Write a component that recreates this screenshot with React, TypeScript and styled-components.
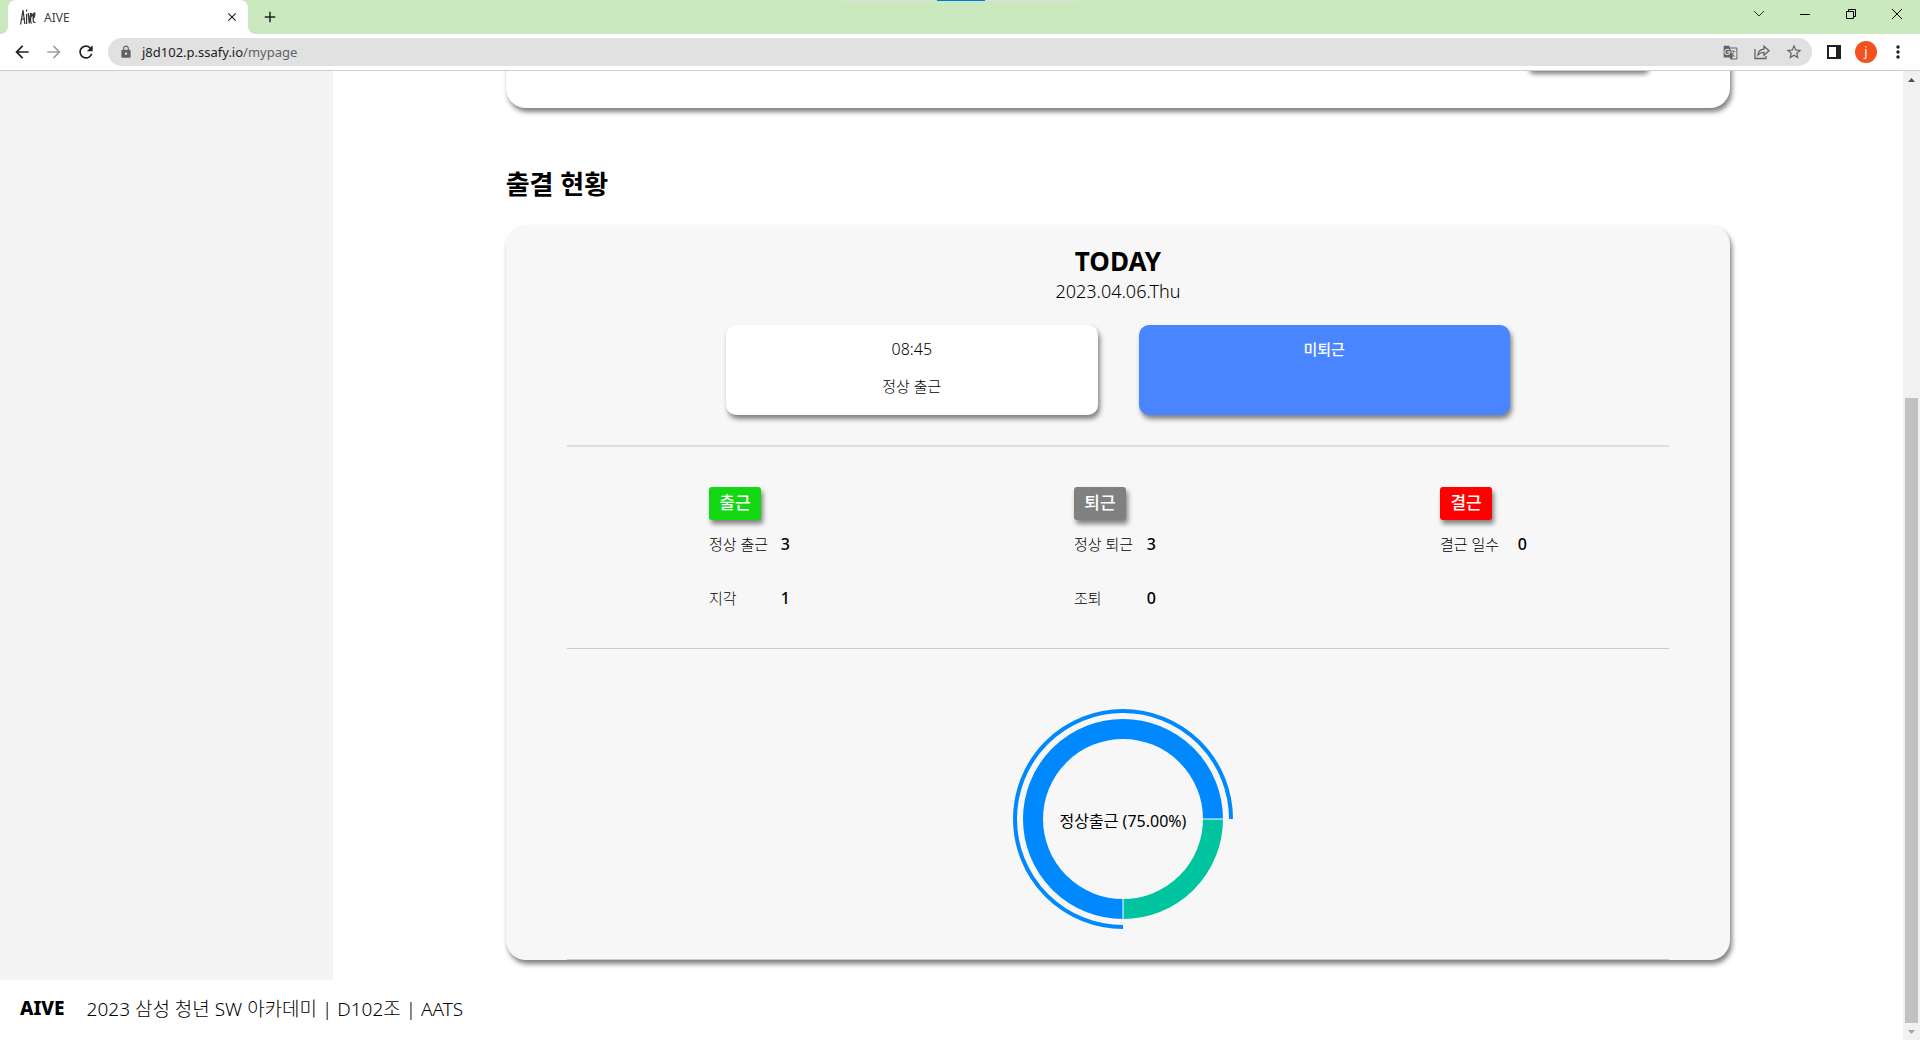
import React from "react";
import styled, { createGlobalStyle } from "styled-components";
import {
  MdArrowBack,
  MdArrowForward,
  MdRefresh,
  MdLock,
  MdGTranslate,
  MdStarBorder,
  MdMoreVert,
  MdClose,
  MdAdd,
} from "react-icons/md";

const GlobalStyle = createGlobalStyle`
  * { box-sizing: border-box; }
  body {
    margin: 0;
    overflow: hidden;
    background: #fff;
    color: #000;
    font-family: "Noto Sans", "Noto Sans CJK KR", sans-serif;
  }
  h2, h3, p, dl, dd { margin: 0; }
  button {
    border: 0;
    padding: 0;
    background: none;
    color: inherit;
    font: inherit;
  }
`;

const shadow = "2px 4px 5px gray";

const Browser = styled.div`
  display: flex;
  flex-direction: column;
  height: 100vh;
`;

/* Browser frame */

const TabStrip = styled.header`
  position: relative;
  display: flex;
  flex: none;
  height: 34px;
  padding-left: 8px;
  background: #cae9bf;
`;

const SnapBar = styled.div`
  position: absolute;
  top: 0;
  left: 50%;
  display: flex;
  justify-content: center;
  width: 241px;
  height: 1px;
  margin-left: -120px;
  background: #dfdfdf;
`;

const SnapHandle = styled.span`
  width: 48px;
  background: #0078d7;
`;

const Tab = styled.div`
  position: relative;
  display: flex;
  align-items: center;
  gap: 8px;
  width: 240px;
  padding: 0 8px 0 12px;
  border-radius: 8px 8px 0 0;
  background: #fff;
  color: #3c4043;
  font-size: 12px;
  &::before,
  &::after {
    content: "";
    position: absolute;
    bottom: 0;
    width: 8px;
    height: 8px;
  }
  &::before {
    left: -8px;
    background: radial-gradient(circle at 0 0, transparent 8px, #fff 8px);
  }
  &::after {
    right: -8px;
    background: radial-gradient(circle at 100% 0, transparent 8px, #fff 8px);
  }
`;

const TabTitle = styled.span`
  flex: 1;
`;

const IconButton = styled.button<{ $width?: number; $color?: string }>`
  display: flex;
  flex: none;
  align-items: center;
  justify-content: center;
  width: ${(p) => p.$width ?? 32}px;
  color: ${(p) => p.$color ?? "#202124"};
`;

const WindowControls = styled.div`
  display: flex;
  height: 28px;
  margin-left: auto;
`;

const Toolbar = styled.div`
  display: flex;
  flex: none;
  align-items: center;
  height: 37px;
  padding: 0 6px;
  border-bottom: 1px solid #ccc;
  background: #fff;
`;

const AddressBar = styled.div`
  display: flex;
  flex: 1;
  align-items: center;
  height: 28px;
  margin: 0 6px;
  padding: 0 2px 0 11px;
  border-radius: 14px;
  background: #e1e1e1;
`;

const Url = styled.p`
  flex: 1;
  padding-left: 9px;
  color: #5f6368;
  font-size: 13px;
  line-height: 20px;
`;

const Host = styled.span`
  color: #202124;
`;

const Avatar = styled.span`
  width: 22px;
  height: 22px;
  border-radius: 50%;
  background: #f4511e;
  color: #fff;
  font-size: 13px;
  line-height: 20px;
  text-align: center;
`;

const Viewport = styled.div`
  display: flex;
  flex: 1;
  min-height: 0;
  overflow: hidden;
`;

const ScrollTrack = styled.div`
  display: flex;
  flex-direction: column;
  align-items: center;
  flex: none;
  width: 17px;
  background: #f1f1f1;
`;

const ScrollSpace = styled.div`
  flex: 310;
`;

const ScrollThumb = styled.div`
  flex: 625;
  width: 13px;
  background: #c1c1c1;
`;

const ScrollArrow = styled.svg`
  flex: none;
  width: 17px;
  height: 17px;
`;

/* Page */

const Page = styled.div`
  display: flex;
  flex: 1;
  flex-direction: column;
`;

const Columns = styled.div`
  display: flex;
  flex: 1;
`;

const Sidebar = styled.aside`
  flex: none;
  width: 333px;
  background: #f4f4f4;
`;

const Main = styled.main`
  display: flex;
  flex: 1;
  flex-direction: column;
  align-items: center;
  padding-bottom: 20px;
`;

const Footer = styled.footer`
  display: flex;
  align-items: center;
  gap: 22px;
  height: 60px;
  padding: 0 20px 4px;
  font-size: 19px;
  font-weight: 300;
`;

const FooterLogo = styled.strong`
  font-weight: 800;
`;

const ProfileCard = styled.section`
  display: flex;
  justify-content: flex-end;
  width: 78%;
  margin-top: -63px;
  padding: 20px 83px 38px;
  border-radius: 20px;
  box-shadow: ${shadow};
`;

const ProfileButton = styled.button`
  width: 120px;
  height: 42px;
  border-radius: 5px;
  background: #fff;
  box-shadow: ${shadow};
`;

const SectionTitle = styled.h2`
  width: 78%;
  margin: 58px 0 23px;
  font-size: 26px;
  font-weight: 600;
  line-height: 36px;
`;

const AttendanceCard = styled.section`
  display: flex;
  flex: 1;
  flex-direction: column;
  align-items: center;
  width: 78%;
  padding-top: 20px;
  border-radius: 20px;
  background: #f7f7f7;
  box-shadow: ${shadow};
`;

const TodayTitle = styled.h3`
  font-size: 26px;
  font-weight: 700;
  line-height: 32px;
`;

const TodayDate = styled.p`
  font-size: 18px;
  font-weight: 300;
  line-height: 28px;
`;

const Tiles = styled.div`
  display: flex;
  gap: 41px;
  width: 64%;
  margin: 20px 0 30px;
`;

const Tile = styled.div<{ $pending?: boolean }>`
  display: flex;
  flex: 1;
  flex-direction: column;
  align-items: center;
  gap: 13px;
  min-height: 90px;
  padding: 12px;
  border-radius: 10px;
  background: ${(p) => (p.$pending ? "#4885ff" : "#fff")};
  box-shadow: ${shadow};
  color: ${(p) => (p.$pending ? "#fff" : "#000")};
  font-size: 15px;
  font-weight: ${(p) => (p.$pending ? 500 : 300)};
  line-height: 24px;
`;

const TileTime = styled.p`
  font-size: 16px;
`;

const Summary = styled.div`
  display: flex;
  justify-content: space-around;
  width: 90%;
  padding: 40px 0 38px;
  border-top: 2px solid #ddd;
  border-bottom: 1px solid #ccc;
`;

const Group = styled.div<{ $width: number }>`
  width: ${(p) => p.$width}px;
`;

const Badge = styled.h3<{ $color: string }>`
  width: 52px;
  margin: 0 0 12px;
  padding-bottom: 2px;
  border-radius: 3px;
  background: ${(p) => p.$color};
  box-shadow: ${shadow};
  color: #fff;
  font-size: 17px;
  font-weight: 500;
  line-height: 31px;
  text-align: center;
`;

const Stats = styled.dl`
  display: flex;
  flex-direction: column;
  gap: 30px;
`;

const Stat = styled.div`
  display: flex;
  justify-content: space-between;
  font-size: 15px;
  line-height: 24px;
`;

const StatName = styled.dt`
  font-weight: 300;
`;

const StatValue = styled.dd`
  font-size: 16px;
  font-weight: 500;
`;

const ChartArea = styled.div`
  display: flex;
  flex: 1;
  justify-content: center;
  width: 90%;
  border-bottom: 1px solid #ccc;
`;

const ChartLabel = styled.text`
  font-size: 16px;
  text-anchor: middle;
`;

const groups = [
  {
    title: "출근",
    color: "#13d713",
    width: 81,
    stats: [
      ["정상 출근", 3],
      ["지각", 1],
    ],
  },
  {
    title: "퇴근",
    color: "#808080",
    width: 82,
    stats: [
      ["정상 퇴근", 3],
      ["조퇴", 0],
    ],
  },
  { title: "결근", color: "#ff0000", width: 87, stats: [["결근 일수", 0]] },
];

const Favicon = () => (
  <svg width="16" height="16" viewBox="0 0 16 16" fill="none" stroke="#333" strokeWidth="1.2">
    <path d="M.6 15.500 L3 1 L4.800 15 M1.300 10.500 L5 9.500" />
    <path d="M6.600 5 V15 M6.600 .5 V2.500 M8.200 4 L9.300 14.500 L10.500 4" />
    <path d="M10.300 9 L12.300 6 Q11.700 3 10.900 6 Q10 14.500 11.800 14 M12.800 10 Q15.500 7 14.700 4 Q13.300 3 13.100 9 Q13.100 15 15.400 13" />
  </svg>
);

const AttendanceChart = () => (
  <svg width="400" height="310" viewBox="0 0 400 310" role="img" aria-label="정상출근 75%">
    <g transform="translate(205 170)">
      <path d="M90 0 A90 90 0 1 0 0 90" fill="none" stroke="#0088fe" strokeWidth="20" />
      <path d="M0 90 A90 90 0 0 0 90 0" fill="none" stroke="#00c49f" strokeWidth="20" />
      <path d="M108 0 A108 108 0 1 0 0 108" fill="none" stroke="#0088fe" strokeWidth="4" />
      <path d="M79 0 H101 M0 79 V101" stroke="#fff" strokeWidth="1" />
      <ChartLabel y="8">정상출근 (75.00%)</ChartLabel>
    </g>
  </svg>
);

export default function App() {
  return (
    <Browser>
      <GlobalStyle />
      <TabStrip>
        <SnapBar>
          <SnapHandle />
        </SnapBar>
        <Tab>
          <Favicon />
          <TabTitle>AIVE</TabTitle>
          <IconButton $width={16} aria-label="탭 닫기">
            <MdClose size={14} />
          </IconButton>
        </Tab>
        <IconButton $width={44} aria-label="새 탭">
          <MdAdd size={18} />
        </IconButton>
        <WindowControls>
          <IconButton $width={46} aria-label="탭 검색">
            <svg width="12" height="8" fill="none" stroke="#333" strokeWidth="1">
              <path d="M1 1 L6 6 L11 1" />
            </svg>
          </IconButton>
          <IconButton $width={46} aria-label="최소화">
            <svg width="10" height="1">
              <rect width="10" height="1" fill="#000" />
            </svg>
          </IconButton>
          <IconButton $width={46} aria-label="이전 크기로">
            <svg width="10" height="10" fill="none" stroke="#000" strokeWidth="1">
              <path d="M.5 2.5 H7.5 V9.5 H.5 Z M2.5 2.5 V.5 H9.5 V7.5 H7.5" />
            </svg>
          </IconButton>
          <IconButton $width={46} aria-label="닫기">
            <svg width="10" height="10" fill="none" stroke="#000" strokeWidth="1">
              <path d="M0 0 L10 10 M10 0 L0 10" />
            </svg>
          </IconButton>
        </WindowControls>
      </TabStrip>
      <Toolbar>
        <IconButton aria-label="뒤로">
          <MdArrowBack size={20} />
        </IconButton>
        <IconButton aria-label="앞으로" $color="#9e9e9e">
          <MdArrowForward size={20} />
        </IconButton>
        <IconButton aria-label="새로고침">
          <MdRefresh size={20} />
        </IconButton>
        <AddressBar>
          <MdLock size={14} color="#5f6368" />
          <Url>
            <Host>j8d102.p.ssafy.io</Host>/mypage
          </Url>
          <IconButton aria-label="번역" $color="#5f6368">
            <MdGTranslate size={15} />
          </IconButton>
          <IconButton aria-label="공유" $color="#5f6368">
            <svg width="16" height="16" fill="none" stroke="currentColor" strokeWidth="1.3">
              <path d="M1 5 V14.5 H12 V12" />
              <path d="M4 11 Q4.5 5.5 10 5.2 V2.2 L15 6.7 L10 11.2 V8.4 Q6.500 8.200 4 11 Z" />
            </svg>
          </IconButton>
          <IconButton aria-label="북마크" $color="#5f6368">
            <MdStarBorder size={18} />
          </IconButton>
        </AddressBar>
        <IconButton aria-label="측면 패널">
          <svg width="14" height="14">
            <path d="M0 0 H14 V14 H0 Z M2 2 V12 H9 V2 Z" fill="#202124" fillRule="evenodd" />
          </svg>
        </IconButton>
        <IconButton aria-label="프로필">
          <Avatar>j</Avatar>
        </IconButton>
        <IconButton aria-label="메뉴">
          <MdMoreVert size={20} />
        </IconButton>
      </Toolbar>
      <Viewport>
        <Page>
          <Columns>
            <Sidebar />
            <Main>
              <ProfileCard>
                <ProfileButton aria-label="프로필 수정" />
              </ProfileCard>
              <SectionTitle>출결 현황</SectionTitle>
              <AttendanceCard>
                <TodayTitle>TODAY</TodayTitle>
                <TodayDate>2023.04.06.Thu</TodayDate>
                <Tiles>
                  <Tile>
                    <TileTime>08:45</TileTime>
                    <p>정상 출근</p>
                  </Tile>
                  <Tile $pending>
                    <p>미퇴근</p>
                  </Tile>
                </Tiles>
                <Summary>
                  {groups.map((g) => (
                    <Group key={g.title} $width={g.width}>
                      <Badge $color={g.color}>{g.title}</Badge>
                      <Stats>
                        {g.stats.map(([name, value]) => (
                          <Stat key={name}>
                            <StatName>{name}</StatName>
                            <StatValue>{value}</StatValue>
                          </Stat>
                        ))}
                      </Stats>
                    </Group>
                  ))}
                </Summary>
                <ChartArea>
                  <AttendanceChart />
                </ChartArea>
              </AttendanceCard>
            </Main>
          </Columns>
          <Footer>
            <FooterLogo>AIVE</FooterLogo>
            <p>2023 삼성 청년 SW 아카데미 | D102조 | AATS</p>
          </Footer>
        </Page>
        <ScrollTrack>
          <ScrollArrow>
            <path d="M5 11 L8.500 7 L12 11 Z" fill="#505050" />
          </ScrollArrow>
          <ScrollSpace />
          <ScrollThumb />
          <ScrollArrow>
            <path d="M5 7 L8.500 11 L12 7 Z" fill="#a3a3a3" />
          </ScrollArrow>
        </ScrollTrack>
      </Viewport>
    </Browser>
  );
}
